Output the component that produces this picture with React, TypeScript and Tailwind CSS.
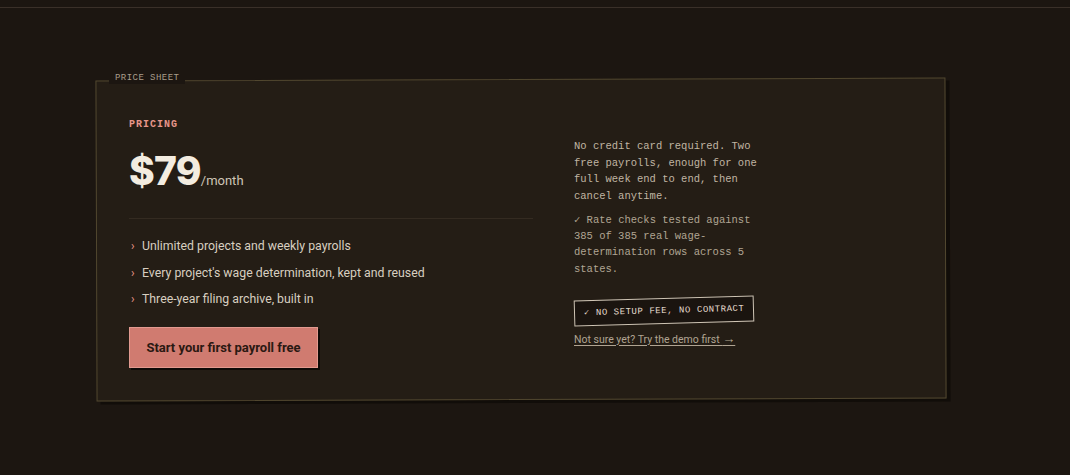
import React from "react";

const mono = { fontFamily: '"Liberation Mono", "DejaVu Sans Mono", monospace' };
const sans = { fontFamily: 'Roboto, "Noto Sans", sans-serif' };
const display = { fontFamily: 'Inter, "Noto Sans", sans-serif' };

const features = [
  "Unlimited projects and weekly payrolls",
  "Every project's wage determination, kept and reused",
  "Three-year filing archive, built in",
];

export default function App() {
  return (
    <div className="min-h-[475px] w-full bg-[#1c1611] text-[#d8cfc0]" style={sans}>
      <div className="h-[7px]" />
      <div className="border-t border-[#3a3029]" />
      <section className="pl-[96px] pt-[71px]">
        <div className="relative w-[850px]">
          {/* card surface, set slightly askew */}
          <div className="absolute inset-0 -rotate-[0.2deg] border border-[#51472f] bg-[#241d15] shadow-[4px_3px_0_#110d09]" />
          <span
            className="absolute left-[13px] top-[-6px] z-10 bg-[#1c1611] px-[6px] text-[9px] leading-[11px] tracking-[0.05em] text-[#a89c8a]"
            style={mono}
          >
            PRICE SHEET
          </span>
          <div className="relative flex items-center gap-[41px] pl-[33px] pr-8 pt-[39px] pb-[32px]">
            <div className="w-[404px]">
              <div
                className="text-[10px] font-bold leading-[14px] tracking-[0.1em] text-[#e8968a]"
                style={mono}
              >
                PRICING
              </div>
              <div className="mt-[19px] flex items-baseline">
                <span
                  className="text-[39px] font-extrabold leading-[40px] tracking-[-0.02em] text-[#f3ece0]"
                  style={display}
                >
                  $79
                </span>
                <span className="text-[13px] text-[#cfc5b5]">/month</span>
              </div>
              <div className="mt-[27px] border-t border-[#342b21]" />
              <ul className="mt-[17px] flex flex-col gap-[6.5px]">
                {features.map((f) => (
                  <li key={f} className="flex items-center text-[12.3px] leading-[20px] text-[#d8cfc0]">
                    <span className="w-[13px] pl-[2px] text-[12px] text-[#e8968a]">›</span>
                    <span>{f}</span>
                  </li>
                ))}
              </ul>
              <button
                className="mt-[18px] flex h-[41px] w-[189px] items-center justify-center border border-[#e29a90] bg-[#d07b70] text-[13px] font-bold text-[#2a1812] shadow-[2px_2px_0_#0e0a07]"
                style={sans}
              >
                Start your first payroll free
              </button>
            </div>
            <div className="w-[192px]" style={mono}>
              <p className="text-[10.5px] leading-[16.4px] text-[#c0b5a3]">
                No credit card required. Two free payrolls, enough for one full week end to end, then
                cancel anytime.
              </p>
              <p className="mt-[8px] text-[10.5px] leading-[16.2px] text-[#b0a593]">
                ✓ Rate checks tested against 385 of 385 real wage-determination rows across 5 states.
              </p>
              <div className="mt-[20px]">
                <span className="inline-block -rotate-[1.6deg] border border-[#cfc5b5] bg-[#1a140f] px-[9px] py-[6px] text-[9px] leading-[12px] tracking-[0.06em] text-[#e6ddd0]">
                  ✓ NO SETUP FEE, NO CONTRACT
                </span>
              </div>
              <a
                href="#"
                className="mt-[8px] block whitespace-nowrap text-[10.5px] leading-[16px] text-[#b0a492] underline underline-offset-2"
                style={sans}
              >
                Not sure yet? Try the demo first <span className="text-[13px] leading-[10px]">→</span>
              </a>
            </div>
          </div>
        </div>
      </section>
    </div>
  );
}
